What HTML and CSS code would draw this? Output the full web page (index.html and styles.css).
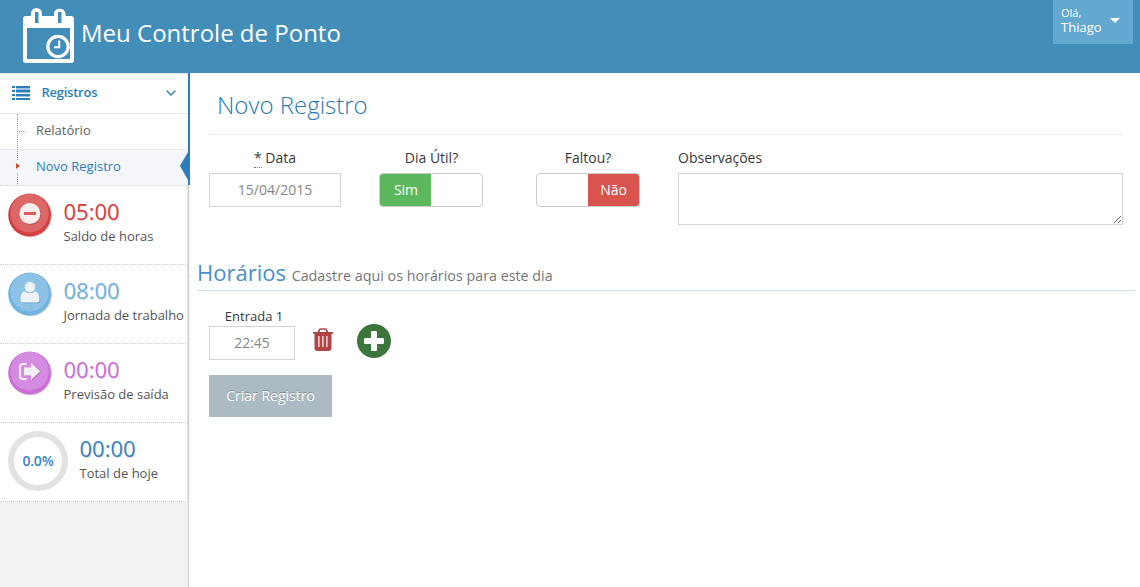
FILE: index.html
```html
<!DOCTYPE html>
<html lang="pt-BR">
<head>
<meta charset="utf-8">
<title>Meu Controle de Ponto</title>
<link rel="stylesheet" href="styles.css">
</head>
<body>
<header class="navbar">
  <div class="brand">
    <svg class="logo" width="52" height="56" viewBox="0 0 52 56">
      <path fill="#fff" fill-rule="evenodd" d="M3 8H8V5.500A5.500 5.500 0 0 1 19 5.500V8H31V5.800A5.800 5.800 0 0 1 42.500 5.800V8H48Q51 8 51 11V52Q51 55 48 55H3Q0 55 0 52V11Q0 8 3 8ZM4 20V51H47V20ZM12 4V15H15.500V4ZM35 4V15H38.500V4Z"/>
      <circle cx="35" cy="38.500" r="10.200" fill="#438eb9" stroke="#fff" stroke-width="3.200"/>
      <path d="M36.200 32.500V39.200H31" fill="none" stroke="#fff" stroke-width="2"/>
    </svg>
    <span class="brand-name">Meu Controle de Ponto</span>
  </div>
  <div class="user"><span class="user-info"><small>Olá,</small>Thiago</span><i class="caret"></i></div>
</header>
<div class="main">
  <aside class="sidebar">
    <nav class="menu">
      <a class="menu-title">
        <svg class="list" width="18" height="14" viewBox="0 0 18 14"><g fill="#2b7dbc"><path d="M0 0H3V2H0ZM0 4H3V6H0ZM0 8H3V10H0ZM0 12H3V14H0ZM4 0H18V2H4ZM4 4H18V6H4ZM4 8H18V10H4ZM4 12H18V14H4Z"/><path opacity=".45" d="M4 2H18V4H4ZM4 6H18V7H4ZM4 10H18V11H4Z"/></g></svg>
        <span>Registros</span>
        <svg class="chevron" width="10" height="6" viewBox="0 0 10 6"><path d="M.7 .7L5 5L9.300 .7" fill="none" stroke="#2b7dbc" stroke-width="1.400"/></svg>
      </a>
      <div class="submenu">
        <a class="sub-item">Relatório</a>
        <a class="sub-item active">Novo Registro</a>
      </div>
    </nav>
    <div class="infobox red">
      <svg class="disc" width="46" height="46" viewBox="0 0 46 46"><circle class="drop" cx="22.600" cy="22" r="21.300"/><circle cx="21.600" cy="21" r="21.400" fill="#d53f40"/><circle cx="21.600" cy="19.300" r="19.200" fill="#dd6667"/><circle class="drop" cx="22.600" cy="20.300" r="10.500"/><circle cx="21.900" cy="19.500" r="10.500" fill="#f7eded"/><rect x="16" y="18" width="12" height="3" fill="#dd5a5b"/></svg>
      <div class="info"><b>05:00</b><span>Saldo de horas</span></div>
    </div>
    <div class="infobox blue">
      <svg class="disc" width="46" height="46" viewBox="0 0 46 46"><circle class="drop" cx="22.600" cy="22" r="21.300"/><circle cx="21.600" cy="21" r="21.400" fill="#6fb3e0"/><circle cx="21.600" cy="19.300" r="19.200" fill="#8bc2e6"/><path class="drop" transform="translate(.8 .8)" d="M16.500 18.200Q12.500 19.500 12.500 27Q12.500 29.500 15.500 29.500H28.500Q31.500 29.500 31.500 27Q31.500 19.500 27.500 18.200Z"/><path fill="#edf3f8" d="M16.500 18.200Q12.500 19.500 12.500 27Q12.500 29.500 15.500 29.500H28.500Q31.500 29.500 31.500 27Q31.500 19.500 27.500 18.200Q22 22 16.500 18.200Z"/><circle cx="22" cy="14" r="5.500" fill="#edf3f8" stroke="#8bc2e6" stroke-width=".6"/></svg>
      <div class="info"><b>08:00</b><span>Jornada de trabalho</span></div>
    </div>
    <div class="infobox pink">
      <svg class="disc" width="46" height="46" viewBox="0 0 46 46"><circle class="drop" cx="22.600" cy="22" r="21.300"/><circle cx="21.600" cy="21" r="21.400" fill="#cb6fd7"/><circle cx="21.600" cy="19.300" r="19.200" fill="#d58be0"/><path class="drop" transform="translate(.8 .8)" d="M16 15.500H23V10.800L32 19.500L23 28V23.500H16Z"/><path d="M18.500 12H15Q12 12 12 15V24Q12 27 15 27H18.500" fill="none" stroke="#f6eef8" stroke-width="2"/><path fill="#f6eef8" d="M16 15.500H23V10.800L32 19.500L23 28V23.500H16Z"/></svg>
      <div class="info"><b>00:00</b><span>Previsão de saída</span></div>
    </div>
    <div class="infobox total">
      <div class="ring">0.0%</div>
      <div class="info"><b>00:00</b><span>Total de hoje</span></div>
    </div>
  </aside>
  <main class="content">
    <h1 class="page-title">Novo Registro</h1>
    <div class="fields">
      <div class="field date"><label><abbr>*</abbr> Data</label><div class="input">15/04/2015</div></div>
      <div class="field day"><label>Dia Útil?</label><div class="switch"><span class="yes">Sim</span><span></span></div></div>
      <div class="field absent"><label>Faltou?</label><div class="switch"><span></span><span class="no">Não</span></div></div>
      <div class="field notes"><label>Observações</label><textarea class="input area"></textarea></div>
    </div>
    <h2 class="section-title">Horários <small>Cadastre aqui os horários para este dia</small></h2>
    <div class="times">
      <div class="entry"><label>Entrada 1</label><div class="input">22:45</div></div>
      <svg class="trash" width="20" height="23" viewBox="0 0 20 23"><path d="M5.500 4.500L6.500 1.800Q6.800 1 8 1H12Q13.200 1 13.500 1.800L14.500 4.500" fill="none" stroke="#b04444" stroke-width="1.700"/><path fill="#b04444" fill-rule="evenodd" d="M0 4H20V5.800H18.500V20Q18.500 23 15.500 23H4.500Q1.500 23 1.500 20V5.800H0ZM5.300 8V19H6.500V8ZM9.300 8V19H10.500V8ZM13.300 8V19H14.500V8Z"/></svg>
      <svg class="plus" width="34" height="34" viewBox="0 0 34 34"><circle cx="17" cy="17" r="17" fill="#3c763d"/><rect x="14" y="7" width="6" height="20" rx="1.200" fill="#fff"/><rect x="7" y="14" width="20" height="6" rx="1.200" fill="#fff"/></svg>
    </div>
    <button class="submit">Criar Registro</button>
  </main>
</div>
</body>
</html>
```
FILE: styles.css
```css
* { box-sizing: border-box; }
body { margin: 0; background: #fff; font-family: "Open Sans", sans-serif; font-size: 13px; color: #393939; height: 587px; display: flex; flex-direction: column; overflow: hidden; }
.navbar { height: 73px; flex: none; background: #438eb9; display: flex; justify-content: space-between; color: #fff; }
.brand { display: flex; padding: 8px 0 0 23px; }
.logo { overflow: visible; }
.brand-name { font-size: 24px; line-height: 34px; margin: 8px 0 0 6px; }
.user { width: 80px; height: 44px; margin-right: 7px; background: #62a8d1; display: flex; padding: 6px 8px; }
.user-info { width: 49px; font-size: 13px; line-height: 14px; }
.user-info small { display: block; font-size: 11px; }
.caret { border: 5px solid transparent; border-top-color: #fff; border-bottom: 0; height: 0; margin-top: 12px; }
.main { display: flex; flex: 1; }
.sidebar { width: 189px; background: #f2f2f2; border-right: 1px solid #ccc; }
.menu { background: #fff; position: relative; }
.menu::after { content: ""; position: absolute; right: -2px; top: 0; width: 2px; height: 112px; background: #2b7dbc; }
.menu-title { height: 41px; border-top: 1px solid #e5e5e5; border-bottom: 1px solid #e5e5e5; display: flex; align-items: center; padding: 0 12px 2px; color: #2b7dbc; font-weight: 600; }
.menu-title span { margin: -2px auto 0 11.5px; letter-spacing: -.25px; }
.submenu { position: relative; }
.submenu::before { content: ""; position: absolute; z-index: 1; left: 17px; top: 0; bottom: 0; border-left: 1px dotted #7fa9c9; }
.sub-item { display: block; position: relative; height: 36px; line-height: 33px; padding-left: 36px; color: #616161; border-bottom: 1px dotted #d8d8d8; }
.sub-item:first-child::before { content: ""; position: absolute; left: 19px; top: 17px; width: 7px; border-top: 1px dotted #7fa9c9; }
.sub-item.active { background: #f4f6fa; color: #2b7dbc; }
.sub-item.active::before { content: ""; position: absolute; z-index: 2; left: 15px; top: 10px; width: 5px; height: 13px; background: #f4f6fa; }
.sub-item.active::after { content: ""; position: absolute; right: 0; top: 2px; border: solid transparent; border-width: 14px 8px 14px 0; border-right-color: #2b7dbc; }
.submenu::after { content: ""; position: absolute; z-index: 3; left: 16px; top: 49px; border: solid transparent; border-width: 3.5px 0 3.5px 4px; border-left-color: #c84d2b; }
.infobox { height: 79px; background: #fff; border-bottom: 1px dotted #d0d0d0; border-right: 1px dotted #d0d0d0; display: flex; padding: 8px 0 0 8px; white-space: nowrap; }
.disc { flex: none; overflow: visible; }
.drop { fill: #000; opacity: .2; }
.info { padding: 0 0 0 9.5px; color: #555; }
.info b { display: block; font-weight: 400; font-size: 22px; line-height: 24px; margin-top: 5px; text-shadow: 1px 1px 0 rgba(0,0,0,.15); }
.info span { display: block; line-height: 20px; margin-top: 3px; }
.red b { color: #d53f40; }
.blue b { color: #6fb3e0; }
.pink b { color: #cb6fd7; }
.total b { color: #3983c2; }
.total .info { padding-left: 11.5px; }
.ring { width: 60px; height: 60px; flex: none; border: 6px solid #e2e2e2; border-radius: 50%; color: #3983c2; font-size: 14px; font-weight: 600; line-height: 48px; text-align: center; letter-spacing: -.2px; }
.content { flex: 1; padding: 16px 5px 0 8px; }
.page-title { margin: 0 12px; padding: 0 8px 12px; height: 46px; border-bottom: 1px dotted #ddd; color: #2679b5; font-size: 24px; line-height: 31px; font-weight: 300; }
.fields { display: flex; height: 90px; padding: 12px 12px 0; text-align: center; font-size: 14px; }
.field label { display: block; height: 26px; line-height: 21px; }
abbr { border-bottom: 1px dotted #777; }
.input { height: 34px; border: 1px solid #d5d5d5; color: #858585; font-size: 14px; line-height: 32px; text-align: center; }
.date { width: 132px; }
.day { width: 104px; margin-left: 38px; }
.day label { padding-left: 1px; }
.absent { width: 104px; margin-left: 53px; }
.notes { flex: 1; margin-left: 38px; text-align: left; }
.area { display: block; width: 100%; height: 52px; resize: vertical; background: #fff; }
.switch { height: 34px; display: flex; border: 1px solid #ccc; border-radius: 4px; overflow: hidden; color: #fff; line-height: 32px; }
.switch span { width: 51px; flex: none; }
.switch .yes { background: #5cb85c; padding-left: 1px; }
.switch .no { background: #d9534f; }
.section-title { margin: 33px 0 0; height: 33px; border-bottom: 1px solid #cce2f1; color: #478fca; font-size: 22px; line-height: 29px; font-weight: 400; }
.section-title small { color: #777; font-size: 14.3px; }
.times { display: flex; padding: 15px 12px 0; }
.entry { width: 86px; text-align: center; }
.entry label { display: block; height: 20px; line-height: 21px; padding-left: 4px; }
.trash { margin: 22px 0 0 18px; }
.plus { margin: 18px 0 0 24px; }
.submit { display: block; width: 123px; height: 42px; margin: 15px 0 0 12px; padding: 0 0 2px; border: 0; background: #abbac3; color: #fff; font: 14px "Open Sans", sans-serif; text-shadow: 0 -1px 0 rgba(0,0,0,.25); }
```
